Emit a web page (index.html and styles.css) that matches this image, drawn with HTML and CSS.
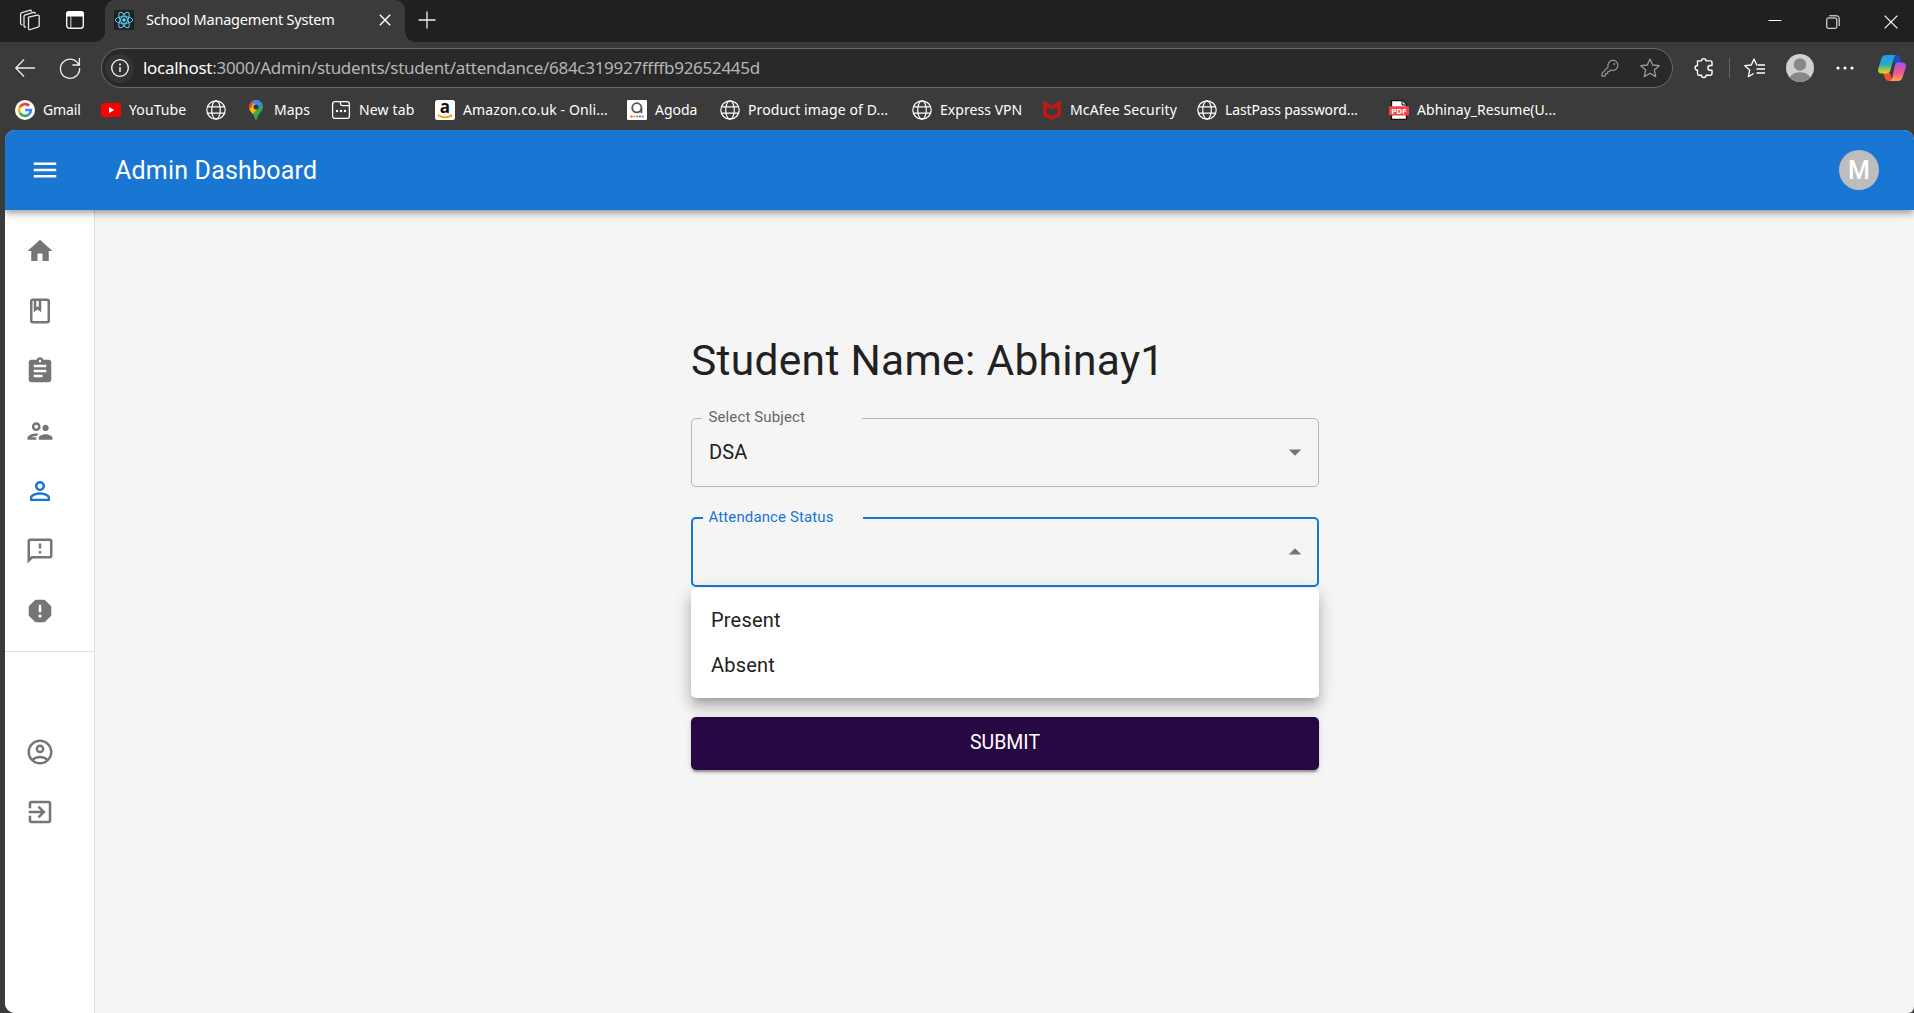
FILE: index.html
```html
<!DOCTYPE html>
<html lang="en">
<head>
<meta charset="utf-8">
<title>School Management System</title>
<link rel="stylesheet" href="styles.css">
</head>
<body>
<svg class="defs" width="0" height="0">
  <symbol id="globe" viewBox="0 0 20 20"><g fill="none" stroke="#fff" stroke-width="1.2"><circle cx="10" cy="10" r="9.2"/><ellipse cx="10" cy="10" rx="4.3" ry="9.2"/><path d="M1.6 6.8h16.8M1.6 13.2h16.8"/></g></symbol>
</svg>
<header class="tabs">
  <svg class="collections" width="22" height="22" viewBox="0 0 22 22" fill="none" stroke="#e8e8e8" stroke-width="1.3" stroke-linejoin="round" stroke-linecap="round"><path d="M9.5 8.2l9-2q1.700-.3 1.700 1.300v9q0 1.300-1.200 1.600l-7.600 2.400q-1.900.4-1.900-1.300z"/><path d="M6.500 18q-1.500.1-1.500-1.500V7.500q0-1.300 1.300-1.700l8.200-2.400q1.500-.3 1.800.9"/><path d="M3 15.800q-1.400 0-1.400-1.500V5.200q0-1.200 1.200-1.600l8-2.300q1.300-.3 1.700.8"/></svg>
  <svg class="workspace" width="18" height="18" viewBox="0 0 18 18"><rect x=".7" y=".7" width="16.600" height="16.600" rx="2.800" fill="none" stroke="#f2f2f2" stroke-width="1.400"/><path d="M0 5.500V3a3 3 0 0 1 3-3h12a3 3 0 0 1 3 3v2.500z" fill="#fff"/><path d="M4.800 5v12" stroke="#bbb" stroke-width="1.200"/></svg>
  <div class="tab">
    <svg width="20" height="20" viewBox="0 0 20 20"><rect width="20" height="20" rx="2" fill="#202124"/><g fill="none" stroke="#5ccbe8" stroke-width="1"><ellipse cx="10" cy="10" rx="8.700" ry="3.400"/><ellipse cx="10" cy="10" rx="8.700" ry="3.400" transform="rotate(60 10 10)"/><ellipse cx="10" cy="10" rx="8.700" ry="3.400" transform="rotate(120 10 10)"/></g><circle cx="10" cy="10" r="1.700" fill="#61dafb"/></svg>
    <span class="tab-title">School Management System</span>
    <svg class="tab-close" width="12" height="12" viewBox="0 0 12 12" stroke="#fff" stroke-width="1.400"><path d="M.8.8l10.400 10.400M11.200.8L.8 11.200"/></svg>
  </div>
  <svg class="plus" width="18" height="18" viewBox="0 0 18 18" stroke="#eee" stroke-width="1.300"><path d="M9 .5v17M.5 9h17"/></svg>
  <div class="window-controls">
    <svg width="14" height="14" viewBox="0 0 14 14" stroke="#fff"><path d="M.5 5.500h13"/></svg>
    <svg width="14" height="14" viewBox="0 0 14 14" fill="none" stroke="#fff"><rect x=".8" y="3" width="10" height="10.300" rx="1"/><path d="M3.300.8h7.500q2.400 0 2.400 2.400V11"/></svg>
    <svg width="14" height="14" viewBox="0 0 14 14" stroke="#fff" stroke-width="1.200"><path d="M.6.6l12.800 12.800M13.400.6L.6 13.400"/></svg>
  </div>
</header>

<div class="toolbar">
  <svg class="back" width="20" height="20" viewBox="0 0 20 20" fill="none" stroke="#eee" stroke-width="1.300"><path d="M20 10H1M9 1.500L.8 10 9 18.500"/></svg>
  <svg class="reload" width="22" height="22" viewBox="0 0 22 22" fill="none" stroke="#eee" stroke-width="1.300"><path d="M20 8.300A9.600 9.600 0 1 0 20.600 11M20.400 1v7h-7"/></svg>
  <div class="address">
    <span class="info"><svg width="18" height="18" viewBox="0 0 18 18"><circle cx="9" cy="9" r="8.300" fill="none" stroke="#fff" stroke-width="1.300"/><path d="M9 8v5" stroke="#fff" stroke-width="1.400"/><circle cx="9" cy="5.400" r="1" fill="#fff"/></svg></span>
    <span class="url"><b>localhost</b>:3000/Admin/students/student/attendance/684c319927ffffb92652445d</span>
    <svg class="key" width="18" height="18" viewBox="0 0 18 18" fill="none" stroke="#999" stroke-width="1.200" stroke-linejoin="round"><path d="M11 1.400a5 5 0 1 1 .6 9.900q-1 0-1.800-.3L8.300 12.500H6.700v2H4.600v2L3.800 17.200H1v-2.900L7 8.200A5.500 5.500 0 0 1 11 1.400z"/><circle cx="13.300" cy="5" r=".9" fill="#999" stroke="none"/></svg>
    <svg class="star" width="20" height="20" viewBox="0 0 20 20" fill="none" stroke="#999" stroke-width="1.300" stroke-linejoin="round"><path d="M10 1l2.700 6 6.500.7-4.900 4.400 1.400 6.500L10 15.300l-5.700 3.300 1.400-6.500L.8 7.700l6.500-.7z"/></svg>
  </div>
  <svg class="puzzle" width="20" height="20" viewBox="0 0 20 20" fill="none" stroke="#fff" stroke-width="1.400" stroke-linejoin="round"><path d="M3.500 2.900h4a2.300 2.300 0 0 1 4.600 0h4.500q1.400 0 1.400 1.400v3.200h-1.700a2.400 2.400 0 0 0 0 4.800H18v3.500q0 1.400-1.400 1.400h-4.500a2.300 2.300 0 0 1-4.600 0H4.900q-1.400 0-1.400-1.400v-3.500a2.400 2.400 0 0 1 0-4.800z"/></svg>
  <span class="separator"></span>
  <svg class="favorites" width="21" height="20" viewBox="0 0 21 20" fill="none" stroke="#fff" stroke-width="1.300" stroke-linejoin="round"><path d="M13.500 7l-.8 0L10 1 7.300 7 .8 7.700l4.900 4.400-1.400 6.500 5.400-3.100M14 7h7M12.500 11H21M12.500 15H21"/></svg>
  <svg class="profile" width="28" height="28" viewBox="0 0 28 28"><clipPath id="pc"><circle cx="14" cy="14" r="14"/></clipPath><g clip-path="url(#pc)"><rect width="28" height="28" fill="#d2d0ce"/><circle cx="14" cy="10.500" r="6.200" fill="#8a8886"/><path d="M3 28c-1.500-13 23.500-13 22 0z" fill="#8a8886"/></g></svg>
  <svg class="dots" width="18" height="4" viewBox="0 0 18 4" fill="#fff"><circle cx="2" cy="2" r="1.600"/><circle cx="9" cy="2" r="1.600"/><circle cx="16" cy="2" r="1.600"/></svg>
  <svg class="copilot" width="28" height="26" viewBox="0 0 28 26"><defs><linearGradient id="ca" x1="0" y1="0" x2="0" y2="1"><stop offset="0" stop-color="#1d9df0"/><stop offset=".5" stop-color="#27a9c4"/><stop offset=".8" stop-color="#9ccb45"/><stop offset="1" stop-color="#f5c61a"/></linearGradient><linearGradient id="cb" x1="0" y1="0" x2="0" y2="1"><stop offset="0" stop-color="#a651f0"/><stop offset=".55" stop-color="#f0578e"/><stop offset="1" stop-color="#ffa34f"/></linearGradient></defs><path d="M14 0h5q2 0 2.800 2.500L23.500 8H16z" fill="#164fc8"/><path d="M5 18h7l2.500 8H11q-3 0-4-3z" fill="#f0522c"/><path d="M8.500 0H18q-1.500.5-2.200 3l-3.500 12.500Q11.500 18.500 8.500 18.500H4q-5 0-3.700-5L3.300 4Q4.500 0 8.500 0z" fill="url(#ca)"/><path d="M19.500 7.500H24q5 0 3.700 5L24.700 22Q23.500 26 19.500 26H12q1.500-.5 2.200-3l2.500-12q.8-3.500 2.800-3.500z" fill="url(#cb)"/></svg>
</div>

<nav class="bookmarks">
  <a class="bm gmail"><svg width="20" height="20" viewBox="0 0 20 20"><circle cx="10" cy="10" r="10" fill="#fff"/><g fill="none" stroke-width="2.700"><path d="M4.900 7.100a5.900 5.900 0 0 1 9.200-1.300" stroke="#ea4335"/><path d="M4.900 12.900a5.900 5.900 0 0 1 0-5.800" stroke="#fbbc05"/><path d="M13.800 14.500a5.900 5.900 0 0 1-8.900-1.600" stroke="#34a853"/><path d="M10 10h5.900a5.900 5.900 0 0 1-2.100 4.500" stroke="#4285f4"/></g></svg><span>Gmail</span></a>
  <a class="bm youtube"><svg width="20" height="20" viewBox="0 0 20 20"><rect y="3" width="20" height="14" rx="3.500" fill="#f00"/><path d="M8 7v6l5.300-3z" fill="#fff"/></svg><span>YouTube</span></a>
  <a class="bm solo"><svg width="20" height="20"><use href="#globe"/></svg></a>
  <a class="bm maps"><svg width="20" height="20" viewBox="0 0 20 20"><clipPath id="pin"><path d="M10 0a7 7 0 0 1 7 7c0 4.500-5 6-6 12q-1 2-2 0C8 13 3 11.500 3 7a7 7 0 0 1 7-7z"/></clipPath><g clip-path="url(#pin)"><rect width="20" height="20" fill="#34a853"/><path d="M0 0h12L3 12z" fill="#ea4335"/><path d="M9 0h11v4L10 7 5 2z" fill="#4285f4"/><path d="M2 10l6-7 4 5-7 8z" fill="#fbbc04"/><path d="M2 3l4 3-3 4z" fill="#ea4335"/></g><circle cx="10" cy="7" r="2.500" fill="#343a4a"/></svg><span>Maps</span></a>
  <a class="bm newtab"><svg width="20" height="20" viewBox="0 0 20 20"><g fill="none" stroke="#fff" stroke-width="1.300"><rect x="1.600" y="1.600" width="16.800" height="16.800" rx="2.500"/><path d="M9.500 1.600v2.200q0 1.800 1.800 1.800h7"/></g><g fill="#fff"><circle cx="6" cy="11" r="1.200"/><circle cx="10" cy="11" r="1.200"/><circle cx="14" cy="11" r="1.200"/></g></svg><span>New tab</span></a>
  <a class="bm amazon"><svg width="20" height="20" viewBox="0 0 20 20"><rect width="20" height="20" rx="2.500" fill="#fff"/><text x="10" y="13" text-anchor="middle" class="glyph-a">a</text><path d="M3 15q7 4.500 13.500.5" fill="none" stroke="#f90" stroke-width="1.500"/><path d="M14.500 14.700l3-.2-.8 2.700z" fill="#f90"/></svg><span>Amazon.co.uk - Onli...</span></a>
  <a class="bm agoda"><svg width="20" height="20" viewBox="0 0 20 20"><rect width="20" height="20" rx="1" fill="#fff"/><g fill="none" stroke="#555" stroke-width="1.800"><circle cx="9.800" cy="7.800" r="4.600"/><path d="M14.400 8v5.200"/></g><circle cx="4.500" cy="16.500" r="1.100" fill="#f33"/><circle cx="7.300" cy="16.500" r="1.100" fill="#f90"/><circle cx="10.100" cy="16.500" r="1.100" fill="#2b5"/><circle cx="12.900" cy="16.500" r="1.100" fill="#93c"/><circle cx="15.700" cy="16.500" r="1.100" fill="#29f"/></svg><span>Agoda</span></a>
  <a class="bm product"><svg width="20" height="20"><use href="#globe"/></svg><span>Product image of D...</span></a>
  <a class="bm vpn"><svg width="20" height="20"><use href="#globe"/></svg><span>Express VPN</span></a>
  <a class="bm mcafee"><svg width="20" height="20" viewBox="0 0 20 20"><path d="M1.200.5L10 5.200 18.800.5v15.300L10 20l-8.800-4.200z" fill="#c01818"/><path d="M4.800 6.500L10 9.300l5.200-2.800v7L10 16.200l-5.200-2.700z" fill="#3b3b3b"/></svg><span>McAfee Security</span></a>
  <a class="bm lastpass"><svg width="20" height="20"><use href="#globe"/></svg><span>LastPass password...</span></a>
  <a class="bm resume"><svg width="20" height="20" viewBox="0 0 20 20"><path d="M2.500.7h11l4 4v14.600h-15z" fill="#fff" stroke="#111" stroke-width="1.300"/><path d="M13 .7v4.300h4.500" fill="#ccc" stroke="#111"/><rect y="6.300" width="20" height="9.200" rx="1" fill="#f44343"/><text x="10" y="13.500" text-anchor="middle" class="glyph-pdf">PDF</text></svg><span>Abhinay_Resume(U...</span></a>
</nav>

<div class="page">
  <div class="appbar">
    <svg width="30" height="30" viewBox="0 0 24 24" fill="#fff"><path d="M3 18h18v-2H3v2zm0-5h18v-2H3v2zm0-7v2h18V6H3z"/></svg>
    <h1>Admin Dashboard</h1>
    <span class="avatar">M</span>
  </div>
  <div class="body">
    <aside class="drawer">
      <ul class="list">
        <li><svg viewBox="0 0 24 24"><path d="M10 20v-6h4v6h5v-8h3L12 3 2 12h3v8z"/></svg></li>
        <li><svg viewBox="0 0 24 24"><path d="M18 2H6c-1.100 0-2 .9-2 2v16c0 1.100.9 2 2 2h12c1.100 0 2-.9 2-2V4c0-1.100-.9-2-2-2zM9 4h2v5l-1-.75L9 9V4zm9 16H6V4h1v9l3-2.250L13 13V4h5v16z"/></svg></li>
        <li><svg viewBox="0 0 24 24"><path d="M19 3h-4.180C14.400 1.840 13.300 1 12 1c-1.300 0-2.400.84-2.820 2H5c-1.100 0-2 .9-2 2v14c0 1.100.9 2 2 2h14c1.100 0 2-.9 2-2V5c0-1.100-.9-2-2-2zm-7 0c.55 0 1 .45 1 1s-.45 1-1 1-1-.45-1-1 .45-1 1-1zm2 14H7v-2h7v2zm3-4H7v-2h10v2zm0-4H7V7h10v2z"/></svg></li>
        <li><svg viewBox="0 0 24 24"><path d="M16.500 12c1.380 0 2.490-1.120 2.490-2.500S17.880 7 16.500 7 14 8.120 14 9.500s1.120 2.500 2.500 2.500zM9 12c1.930 0 3.500-1.570 3.500-3.500S10.930 5 9 5 5.500 6.570 5.500 8.500 7.070 12 9 12zm0-5c.83 0 1.500.67 1.500 1.500S9.830 10 9 10s-1.500-.67-1.500-1.500S8.170 7 9 7zm.05 10H4.770c.99-.5 2.700-1 4.230-1 .11 0 .23.01.34.01.34-.67.93-1.330 1.680-1.870C10.280 14.050 9.580 14 9 14c-2.340 0-7 1.170-7 3.500V19h7v-1.500c0-.17.02-.34.05-.5zm7.450-2.500c-1.840 0-5.500 1.010-5.500 3V19h11v-1.500c0-1.990-3.660-3-5.500-3z"/></svg></li>
        <li class="active"><svg viewBox="0 0 24 24"><path d="M12 5.900c1.160 0 2.100.94 2.100 2.100s-.94 2.100-2.100 2.100S9.900 9.160 9.900 8s.94-2.100 2.100-2.100m0 9c2.970 0 6.100 1.460 6.100 2.100v1.100H5.900V17c0-.64 3.130-2.100 6.100-2.100M12 4C9.790 4 8 5.790 8 8s1.790 4 4 4 4-1.790 4-4-1.790-4-4-4zm0 9c-2.670 0-8 1.340-8 4v3h16v-3c0-2.660-5.330-4-8-4z"/></svg></li>
        <li><svg viewBox="0 0 24 24"><path d="M20 2H4c-1.100 0-1.990.9-1.990 2L2 22l4-4h14c1.100 0 2-.9 2-2V4c0-1.100-.9-2-2-2zm0 14H5.170l-.59.59-.58.580V4h16v12zm-9-4h2v2h-2zm0-6h2v4h-2z"/></svg></li>
        <li><svg viewBox="0 0 24 24"><path d="M15.730 3H8.270L3 8.270v7.460L8.270 21h7.460L21 15.730V8.270L15.730 3zM12 17.300c-.72 0-1.300-.58-1.300-1.300 0-.72.58-1.300 1.300-1.300.72 0 1.300.58 1.300 1.300 0 .72-.58 1.300-1.300 1.300zm1-4.300h-2V7h2v6z"/></svg></li>
      </ul>
      <hr>
      <ul class="list account">
        <li><svg viewBox="0 0 24 24"><path d="M12 2C6.480 2 2 6.480 2 12s4.480 10 10 10 10-4.480 10-10S17.520 2 12 2zM7.350 18.500C8.660 17.560 10.260 17 12 17s3.340.56 4.650 1.500C15.340 19.440 13.740 20 12 20s-3.340-.56-4.650-1.500zm10.790-1.380C16.450 15.800 14.320 15 12 15s-4.450.8-6.140 2.120C4.700 15.730 4 13.950 4 12c0-4.420 3.580-8 8-8s8 3.580 8 8c0 1.950-.7 3.730-1.860 5.120z"/><path d="M12 6c-1.930 0-3.500 1.570-3.500 3.500S10.070 13 12 13s3.500-1.570 3.500-3.500S13.930 6 12 6zm0 5c-.83 0-1.500-.67-1.500-1.500S11.170 8 12 8s1.500.67 1.500 1.500S12.830 11 12 11z"/></svg></li>
        <li><svg viewBox="0 0 24 24"><path d="M10.090 15.590 11.500 17l5-5-5-5-1.410 1.410L12.670 11H3v2h9.670l-2.580 2.590zM19 3H5c-1.110 0-2 .9-2 2v4h2V5h14v14H5v-4H3v4c0 1.100.89 2 2 2h14c1.100 0 2-.9 2-2V5c0-1.100-.9-2-2-2z"/></svg></li>
      </ul>
    </aside>
    <main>
      <form class="form">
        <h2>Student Name: Abhinay1</h2>
        <div class="select">
          <fieldset><legend></legend></fieldset>
          <label>Select Subject</label>
          <span class="value">DSA</span>
          <svg class="arrow" width="30" height="30" viewBox="0 0 24 24"><path d="m7 10 5 5 5-5z"/></svg>
        </div>
        <div class="select focused">
          <fieldset><legend></legend></fieldset>
          <label>Attendance Status</label>
          <span class="value"></span>
          <svg class="arrow" width="30" height="30" viewBox="0 0 24 24"><path d="m7 10 5 5 5-5z"/></svg>
          <ul class="menu">
            <li>Present</li>
            <li>Absent</li>
          </ul>
        </div>
        <button type="button">SUBMIT</button>
      </form>
    </main>
  </div>
</div>
</body>
</html>
```
FILE: styles.css
```css
* { box-sizing: border-box; }
body {
  margin: 0;
  width: 1914px;
  height: 1013px;
  overflow: hidden;
  background: #3b3b3b;
  font-family: Roboto, "Liberation Sans", sans-serif;
  display: flex;
  flex-direction: column;
}
.defs { position: absolute; }
svg { display: block; flex: none; overflow: visible; }
ul { list-style: none; margin: 0; padding: 0; }

/* Browser tab strip */
.tabs, .toolbar, .bookmarks { font-family: "Noto Sans", "Open Sans", sans-serif; color: #fff; flex: none; }
.tabs { height: 42px; background: #202020; display: flex; align-items: flex-start; }
.collections { margin: 9px 0 0 19px; }
.workspace { margin: 11px 0 0 25px; }
.tab {
  position: relative;
  width: 300px;
  height: 42px;
  margin-left: 21px;
  padding: 0 14px 2px 9px;
  background: #3b3b3b;
  border-radius: 10px 10px 0 0;
  display: flex;
  align-items: center;
}
.tab::before, .tab::after { content: ""; position: absolute; bottom: 0; width: 10px; height: 10px; }
.tab::before { left: -10px; background: radial-gradient(circle at 0 0, #202020 9.5px, #3b3b3b 10px); }
.tab::after { right: -10px; background: radial-gradient(circle at 100% 0, #202020 9.5px, #3b3b3b 10px); }
.tab-title { font-size: 14.5px; letter-spacing: -0.2px; margin-left: 12px; padding-bottom: 2px; white-space: nowrap; }
.tab-close { margin-left: auto; }
.plus { margin: 11px 0 0 13px; }
.window-controls { display: flex; gap: 44px; margin: 15px 16px 0 auto; }

/* Navigation bar */
.toolbar { height: 52px; display: flex; align-items: center; padding-left: 15px; }
.reload { margin-left: 24px; }
.address {
  width: 1572px;
  height: 40px;
  margin-left: 20px;
  padding: 0 12px 0 3px;
  border: 1px solid #6b6b6b;
  border-radius: 20px;
  background: #292929;
  display: flex;
  align-items: center;
}
.info { width: 29px; height: 29px; border-radius: 50%; background: #343434; display: flex; align-items: center; justify-content: center; }
.url { font-size: 17px; letter-spacing: -0.29px; margin-left: 9px; padding-bottom: 2px; color: #b5b5b5; white-space: nowrap; }
.url b { font-weight: 400; color: #fff; }
.key { margin-left: auto; }
.star { margin-left: 21px; }
.puzzle { margin-left: 21px; }
.separator { width: 1px; height: 20px; background: #666; margin-left: 15px; }
.favorites { margin-left: 14px; }
.profile { margin-left: 21px; }
.dots { margin-left: 22px; }
.copilot { margin-left: 24px; }

/* Bookmarks bar */
.bookmarks {
  height: 36px;
  padding: 0 0 4px 15px;
  font-size: 14px;
  display: flex;
  align-items: center;
  gap: 21px;
}
.bm { display: flex; align-items: center; gap: 8px; white-space: nowrap; flex: none; height: 32px; }
.bm span { display: block; padding-bottom: 2px; }
.gmail { width: 65px; letter-spacing: -.1px; }
.youtube { width: 84px; letter-spacing: .1px; }
.solo { width: 19px; }
.maps { width: 64px; }
.newtab { width: 83px; letter-spacing: .15px; }
.amazon { width: 171px; letter-spacing: .12px; }
.agoda { width: 72px; letter-spacing: -.05px; }
.product { width: 171px; letter-spacing: .12px; }
.vpn { width: 109px; letter-spacing: .05px; }
.mcafee { width: 134px; letter-spacing: .12px; }
.lastpass { width: 171px; letter-spacing: -.12px; }
.resume { letter-spacing: .05px; }
.glyph-a { font: 700 17px "Open Sans", sans-serif; letter-spacing: 0; fill: #111; }
.glyph-pdf { font: 700 7px "DejaVu Sans", sans-serif; letter-spacing: 0; fill: #fff; }

/* Web page */
.page {
  flex: 1;
  margin-left: 5px;
  border-radius: 10px 10px 6px 10px;
  overflow: hidden;
  background: #f5f5f5;
  display: flex;
  flex-direction: column;
}
.appbar {
  position: relative;
  z-index: 1;
  height: 80px;
  flex: none;
  padding: 0 35px 0 25px;
  background: #1976d2;
  color: #fff;
  box-shadow: 0 2.5px 5px -1px rgba(0,0,0,.2), 0 5px 6px 0 rgba(0,0,0,.14), 0 1px 12px 0 rgba(0,0,0,.12);
  display: flex;
  align-items: center;
}
.appbar h1 { margin: 0 0 0 55px; font-size: 25px; font-weight: 400; letter-spacing: .19px; }
.avatar {
  width: 40px;
  height: 40px;
  margin-left: auto;
  border-radius: 50%;
  background: #bdbdbd;
  font-size: 25px;
  font-weight: 500;
  display: flex;
  align-items: center;
  justify-content: center;
}
.body { flex: 1; display: flex; }
.drawer { width: 90px; background: #fff; border-right: 1px solid #e0e0e0; }
.list { padding-top: 11px; }
.list li { height: 60px; padding: 15px 20px; }
.list svg { width: 30px; height: 30px; fill: #757575; }
.list .active svg { fill: #1976d2; }
.drawer hr { height: 1px; margin: 10px 0; border: 0; background: #e0e0e0; }
.account { padding-top: 60px; }

main { flex: 1; display: flex; justify-content: center; align-items: flex-start; }
.form { width: 628px; padding-top: 125px; margin-left: 1px; }
.form h2 { margin: 0 0 30px; font-size: 42.5px; line-height: 52.5px; font-weight: 400; letter-spacing: .31px; color: #212121; }
.select {
  position: relative;
  height: 69px;
  margin-bottom: 31px;
  padding: 0 9px 0 18px;
  display: flex;
  align-items: center;
  justify-content: space-between;
}
.select fieldset {
  position: absolute;
  inset: -6px 0 0;
  margin: 0;
  padding: 0 10px;
  border: 1px solid rgba(0,0,0,.25);
  border-radius: 5px;
}
.select legend { width: 160px; height: 13px; padding: 0; }
.select label { position: absolute; left: 17.5px; top: -11px; font-size: 15px; line-height: 20px; letter-spacing: .12px; color: #666; }
.value { font-size: 20px; letter-spacing: .1px; color: #212121; }
.arrow { fill: #757575; }
.focused fieldset { border: 2px solid #1976d2; }
.focused label { color: #1976d2; }
.focused .arrow { transform: rotate(180deg); }
.menu {
  position: absolute;
  top: 70px;
  left: 0;
  width: 628px;
  padding: 10px 0;
  border-radius: 5px;
  background: #fff;
  box-shadow: 0 6px 6px -4px rgba(0,0,0,.2), 0 10px 12px 1px rgba(0,0,0,.14), 0 4px 18px 2px rgba(0,0,0,.12);
}
.menu li { height: 45px; padding: 0 20px; font-size: 20px; line-height: 45px; letter-spacing: .19px; color: #212121; }
.form button {
  width: 100%;
  height: 53px;
  margin-top: 99px;
  padding: 0 0 2px;
  border: 0;
  border-radius: 5px;
  background: #270843;
  color: #fff;
  font: 400 19.5px Roboto, sans-serif;
  letter-spacing: 0;
  box-shadow: 0 4px 1px -2px rgba(0,0,0,.2), 0 2.5px 2.5px 0 rgba(0,0,0,.14), 0 1px 6px 0 rgba(0,0,0,.12);
}
```
